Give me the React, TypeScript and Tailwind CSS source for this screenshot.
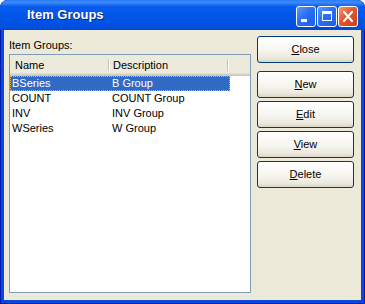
const rows = [
  { name: "BSeries", desc: "B Group" },
  { name: "COUNT", desc: "COUNT Group" },
  { name: "INV", desc: "INV Group" },
  { name: "WSeries", desc: "W Group" },
];

function XpButton({ label }: { label: string }) {
  return (
    <button className="flex h-[27px] w-full items-center justify-center rounded-[3px] border border-[#003c74] bg-[linear-gradient(180deg,#ffffff_0%,#f6f5f0_55%,#ebe8dc_85%,#d9d5c6_100%)] text-[11px] leading-[13px] text-black">
      <span>
        <u>{label[0]}</u>
        {label.slice(1)}
      </span>
    </button>
  );
}

function TitleButtons() {
  const blue =
    "relative h-[21px] w-5 rounded-[3px] border border-white bg-[linear-gradient(135deg,#5b9bff_0%,#2c6ff0_45%,#1d5ee6_100%)]";
  return (
    <div className="ml-auto mt-[3px] flex gap-px">
      <div className={blue}>
        <div className="absolute left-[4px] top-[12px] h-[3px] w-[6px] bg-white" />
      </div>
      <div className={blue}>
        <div className="absolute left-[4px] top-[4px] h-[10px] w-[10px] border border-t-[3px] border-white" />
      </div>
      <div className="relative h-[21px] w-5 rounded-[3px] border border-white bg-[linear-gradient(135deg,#f29a78_0%,#e2582f_45%,#cf3f16_100%)]">
        <svg className="absolute left-[4px] top-[4px]" width="10" height="11" viewBox="0 0 10 11">
          <path d="M1 1 L9 10 M9 1 L1 10" stroke="#fff" strokeWidth="2" strokeLinecap="square" />
        </svg>
      </div>
    </div>
  );
}

export default function App() {
  return (
    <div className="h-[304px] w-[365px] bg-white font-['Liberation_Sans',Arial,sans-serif]">
      <div className="flex h-full flex-col rounded-t-[8px] bg-[#0a48db] shadow-[inset_1px_0_#0019b0,inset_-1px_0_#0019b0,inset_0_-1px_#0019b0]">
        {/* title bar */}
        <div className="flex h-[30px] shrink-0 items-center rounded-t-[8px] bg-[linear-gradient(180deg,#2a7bff_0%,#3d8af7_8%,#0a5cf0_22%,#0056e8_50%,#0052e3_80%,#0048d8_100%)] pl-[27px] pr-[7px]">
          <span className="pb-[1px] text-[13px] font-bold text-white [text-shadow:1px_1px_#0a2a8a]">
            Item Groups
          </span>
          <TitleButtons />
        </div>

        {/* client */}
        <div className="mx-[4px] mb-[4px] flex flex-1 gap-[6px] bg-[#ece9d8] pb-[7px] pl-[5px] pr-[7px] text-[11px] text-black">
          <div className="flex w-[242px] flex-col pt-[9px]">
            <div className="h-[13px] leading-[13px]">Item Groups:</div>
            <div className="mt-[2px] flex flex-1 flex-col border border-[#7f9db9] bg-white">
              <div className="flex h-[18px] items-center bg-[#ebeadb] pt-[2px] leading-[13px]">
                <div className="w-[98px] pl-[5px]">Name</div>
                <div className="flex h-[12px] w-[2px]">
                  <div className="w-px bg-[#c7c5b2]" />
                  <div className="w-px bg-white" />
                </div>
                <div className="w-[117px] pl-[3px]">Description</div>
                <div className="flex h-[12px] w-[2px]">
                  <div className="w-px bg-[#c7c5b2]" />
                  <div className="w-px bg-white" />
                </div>
              </div>
              <div className="h-px bg-[#e2decd]" />
              <div className="h-px bg-[#d6d2c2]" />
              <div className="h-px bg-[#cbc7b8]" />
              <div className="flex flex-col">
                {rows.map((r, i) => (
                  <div
                    key={r.name}
                    className={
                      i === 0
                        ? "flex h-[15px] w-[220px] bg-[#316ac5] leading-[15px] text-white outline-1 -outline-offset-1 outline-dotted outline-[#e8b04a]"
                        : "flex h-[15px] w-[220px] leading-[15px]"
                    }
                  >
                    <div className="w-[100px] pl-[2px]">{r.name}</div>
                    <div className="pl-[2px]">{r.desc}</div>
                  </div>
                ))}
              </div>
            </div>
          </div>

          <div className="flex w-[97px] flex-col gap-[3px] pt-[6px]">
            <XpButton label="Close" />
            <div className="mt-[5px]">
              <XpButton label="New" />
            </div>
            <XpButton label="Edit" />
            <XpButton label="View" />
            <XpButton label="Delete" />
          </div>
        </div>
      </div>
    </div>
  );
}
